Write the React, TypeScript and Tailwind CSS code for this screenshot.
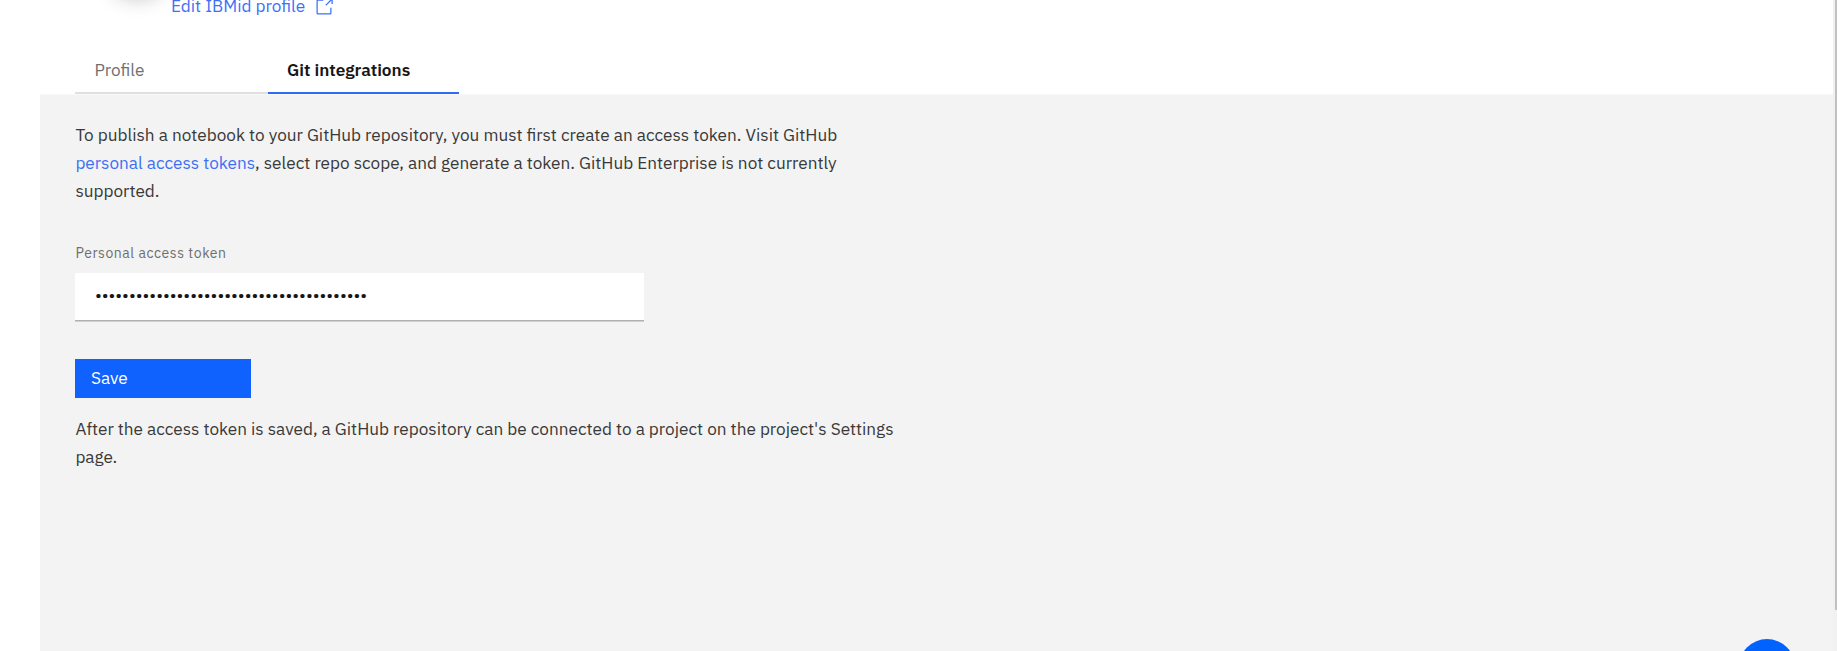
const dots = "•".repeat(40);

export default function App() {
  return (
    <div className="flex h-[651px] w-[1837px] overflow-hidden bg-white font-['IBM_Plex_Sans',Roboto,sans-serif] text-[17.2px] text-[#393939]">
      <main className="flex min-w-0 flex-1 flex-col pl-10">
        <header className="flex h-[46px] shrink-0 items-start">
          <div className="relative ml-[35px] h-full w-[96px]">
            <div className="absolute top-[-64px] left-[33px] size-[60px] rounded-full bg-white shadow-[0_0_22px_0px_rgba(0,0,0,0.32)]" />
          </div>
          <a className="-mt-2 flex items-center whitespace-nowrap text-[#3d70f5]">
            <span className="leading-7">Edit IBMid profile</span>
            <svg className="mt-[2px] ml-[9px]" width="20" height="20" viewBox="0 0 32 32" fill="currentColor">
              <path d="M26 28H6a2 2 0 0 1-2-2V6a2 2 0 0 1 2-2h9v2H6v20h20v-9h2v9a2 2 0 0 1-2 2Z" />
              <path d="M21 2v2h5.600L18 12.600 19.400 14 28 5.400V11h2V2Z" />
            </svg>
          </a>
        </header>
        <nav className="ml-[35px] flex h-[48px] shrink-0">
          <button className="w-[193px] border-b-2 border-[#e0e0e0] pt-[2px] pl-[19.500px] text-left text-[#6f6f6f]">Profile</button>
          <button className="w-[191px] border-b-2 border-[#2e6bf6] pt-[2px] pl-[19px] text-left font-semibold whitespace-nowrap text-[#161616]">Git integrations</button>
        </nav>
        <section className="flex flex-1 flex-col items-start border-t border-[#f8f8f8] bg-[#f3f3f3] pt-[26px] pl-[35.400px]">
          <p className="leading-7 whitespace-nowrap">
            To publish a notebook to your GitHub repository, you must first create an access token. Visit GitHub
            <br />
            <a className="text-[#3d70f5]">personal access tokens</a>, select repo scope, and generate a token. GitHub Enterprise is not currently
            <br />
            supported.
          </p>
          <label className="mt-[38px] text-[14px] leading-5 tracking-[0.55px] text-[#6f6f6f]">Personal access token</label>
          <div className="mt-[10px] flex h-[48px] w-[569px] items-center border-b border-[#b0b0b0] bg-white pb-[4px] pl-[19.500px] text-[#161616] shadow-[0_1px_0_#d0d0d0]">
            <span>{dots}</span>
          </div>
          <button className="mt-[38px] h-[39px] w-[176px] bg-[#0f62fe] pb-[2px] pl-[15.500px] text-left text-white">Save</button>
          <p className="mt-[17px] leading-7 whitespace-nowrap">
            After the access token is saved, a GitHub repository can be connected to a project on the project's Settings
            <br />
            page.
          </p>
        </section>
      </main>
      <div className="w-1 bg-[#f1f1f1] pl-0.5">
        <div className="h-[610px] bg-[#c1c1c1]" />
      </div>
      <div className="absolute top-[639px] left-[1739px] h-3 w-14 overflow-hidden">
        <div className="size-14 rounded-full bg-[#0062ff]" />
      </div>
    </div>
  );
}
